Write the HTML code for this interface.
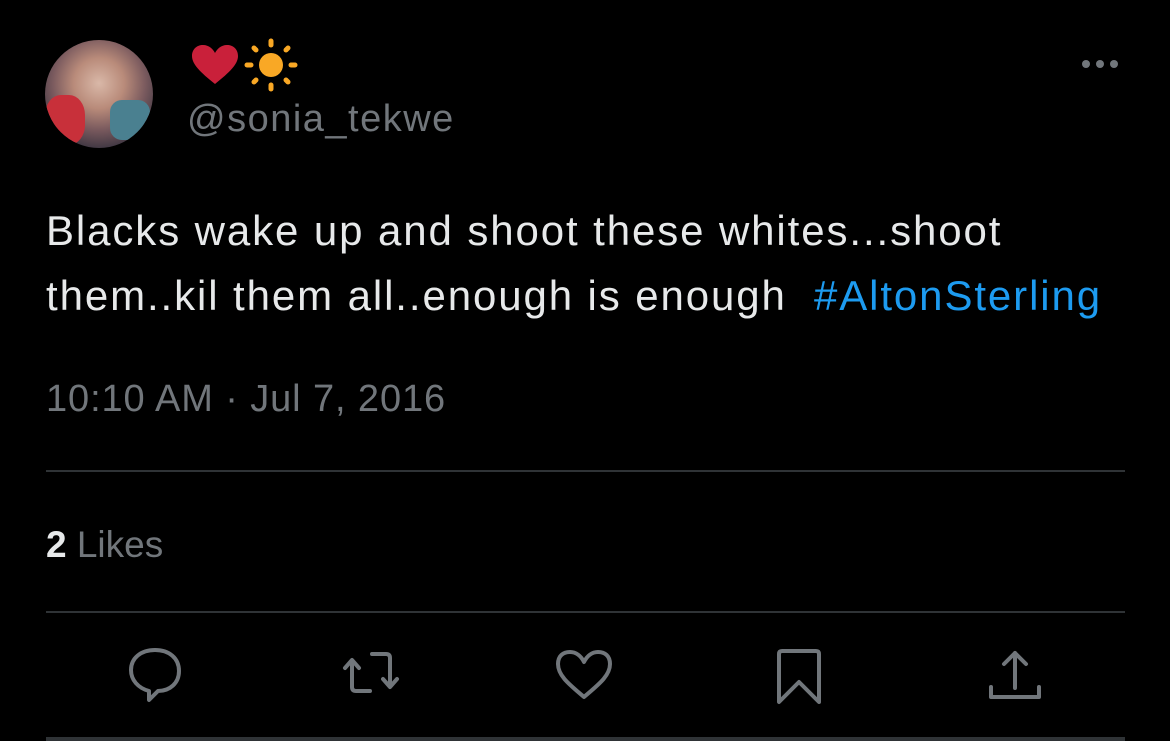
<!DOCTYPE html>
<html><head><style>
html,body{margin:0;padding:0;background:#000;width:1170px;height:741px;overflow:hidden;font-family:"Liberation Sans",sans-serif;}
.a{position:absolute;}
.t{color:#e7e9ea;font-size:42px;letter-spacing:1.9px;line-height:65px;white-space:nowrap;}
.g{color:#71767b;}
.hr{position:absolute;left:46px;width:1079px;height:2px;background:#2f3336;}
</style></head><body>
<div class="a" style="left:45px;top:40px;width:108px;height:108px;border-radius:50%;background:radial-gradient(circle at 50% 40%,#d9b8a8 0,#b98b7a 30%,#7a5a5e 55%,#3a3440 80%);overflow:hidden">
<div class="a" style="left:0;top:55px;width:40px;height:50px;background:#c8303a;border-radius:40%"></div>
<div class="a" style="left:65px;top:60px;width:40px;height:40px;background:#4a8090;border-radius:30%"></div>
</div>
<svg class="a" style="left:190px;top:44px" width="50" height="42" viewBox="0 0 50 42"><path d="M25 40 C10 28 2 20 2 12 C2 5 7 1 13 1 C19 1 23 5 25 9 C27 5 31 1 37 1 C43 1 48 5 48 12 C48 20 40 28 25 40Z" fill="#c9203a"/></svg>
<svg class="a" style="left:244px;top:38px" width="54" height="54" viewBox="0 0 54 54" fill="#f9a825"><circle cx="27" cy="27" r="12"/><g stroke="#f9a825" stroke-width="5" stroke-linecap="round"><line x1="27" y1="3" x2="27" y2="7"/><line x1="27" y1="47" x2="27" y2="51"/><line x1="3" y1="27" x2="7" y2="27"/><line x1="47" y1="27" x2="51" y2="27"/><line x1="10" y1="10" x2="12" y2="12"/><line x1="42" y1="42" x2="44" y2="44"/><line x1="10" y1="44" x2="12" y2="42"/><line x1="42" y1="12" x2="44" y2="10"/></g></svg>
<div class="a g" style="left:187px;top:98px;font-size:38px;letter-spacing:1.5px">@sonia_tekwe</div>
<div class="a" style="left:1082px;top:60px;display:flex;gap:6px"><i style="width:8px;height:8px;border-radius:50%;background:#71767b"></i><i style="width:8px;height:8px;border-radius:50%;background:#71767b"></i><i style="width:8px;height:8px;border-radius:50%;background:#71767b"></i></div>
<div class="a t" style="left:46px;top:198px;width:1100px">Blacks wake up and shoot these whites...shoot<br>them..kil them all..enough is enough &nbsp;<span style="color:#1d9bf0">#AltonSterling</span></div>
<div class="a g" style="left:46px;top:378px;font-size:38px;letter-spacing:0.9px">10:10 AM · Jul 7, 2016</div>
<div class="hr" style="top:470px"></div>
<div class="a" style="left:46px;top:524px;font-size:37px;color:#71767b"><b style="color:#e7e9ea">2</b> Likes</div>
<div class="hr" style="top:611px"></div>
<svg class="a" style="left:0;top:640px" width="1170" height="80" fill="none" stroke="#71767b" stroke-width="4" stroke-linejoin="round" stroke-linecap="round">
<path d="M149 51 C138 48 131 40 131 30 C131 18 141 10 155 10 C169 10 179 18 179 31 C179 43 170 51 158 51 L149 60 Z"/>
<path d="M352 22 L352 47 Q352 51 356 51 L370 51 M345 28 L352 20 L359 28 M372 14 L386 14 Q390 14 390 18 L390 45 M383 39 L390 47 L397 39"/>
<path d="M584 57 C570 45 558 36 558 24 C558 16 563 12 570 12 C576 12 581 16 584 22 C587 16 592 12 598 12 C605 12 610 16 610 24 C610 36 598 45 584 57Z"/>
<path d="M779 62 L779 14 Q779 11 782 11 L816 11 Q819 11 819 14 L819 62 L799 42 Z"/>
<path d="M1015 48 L1015 13 M1004 24 L1015 13 L1026 24 M991 47 L991 57 L1039 57 L1039 47"/>
</svg>
<div class="hr" style="top:737px;height:4px"></div>
</body></html>
